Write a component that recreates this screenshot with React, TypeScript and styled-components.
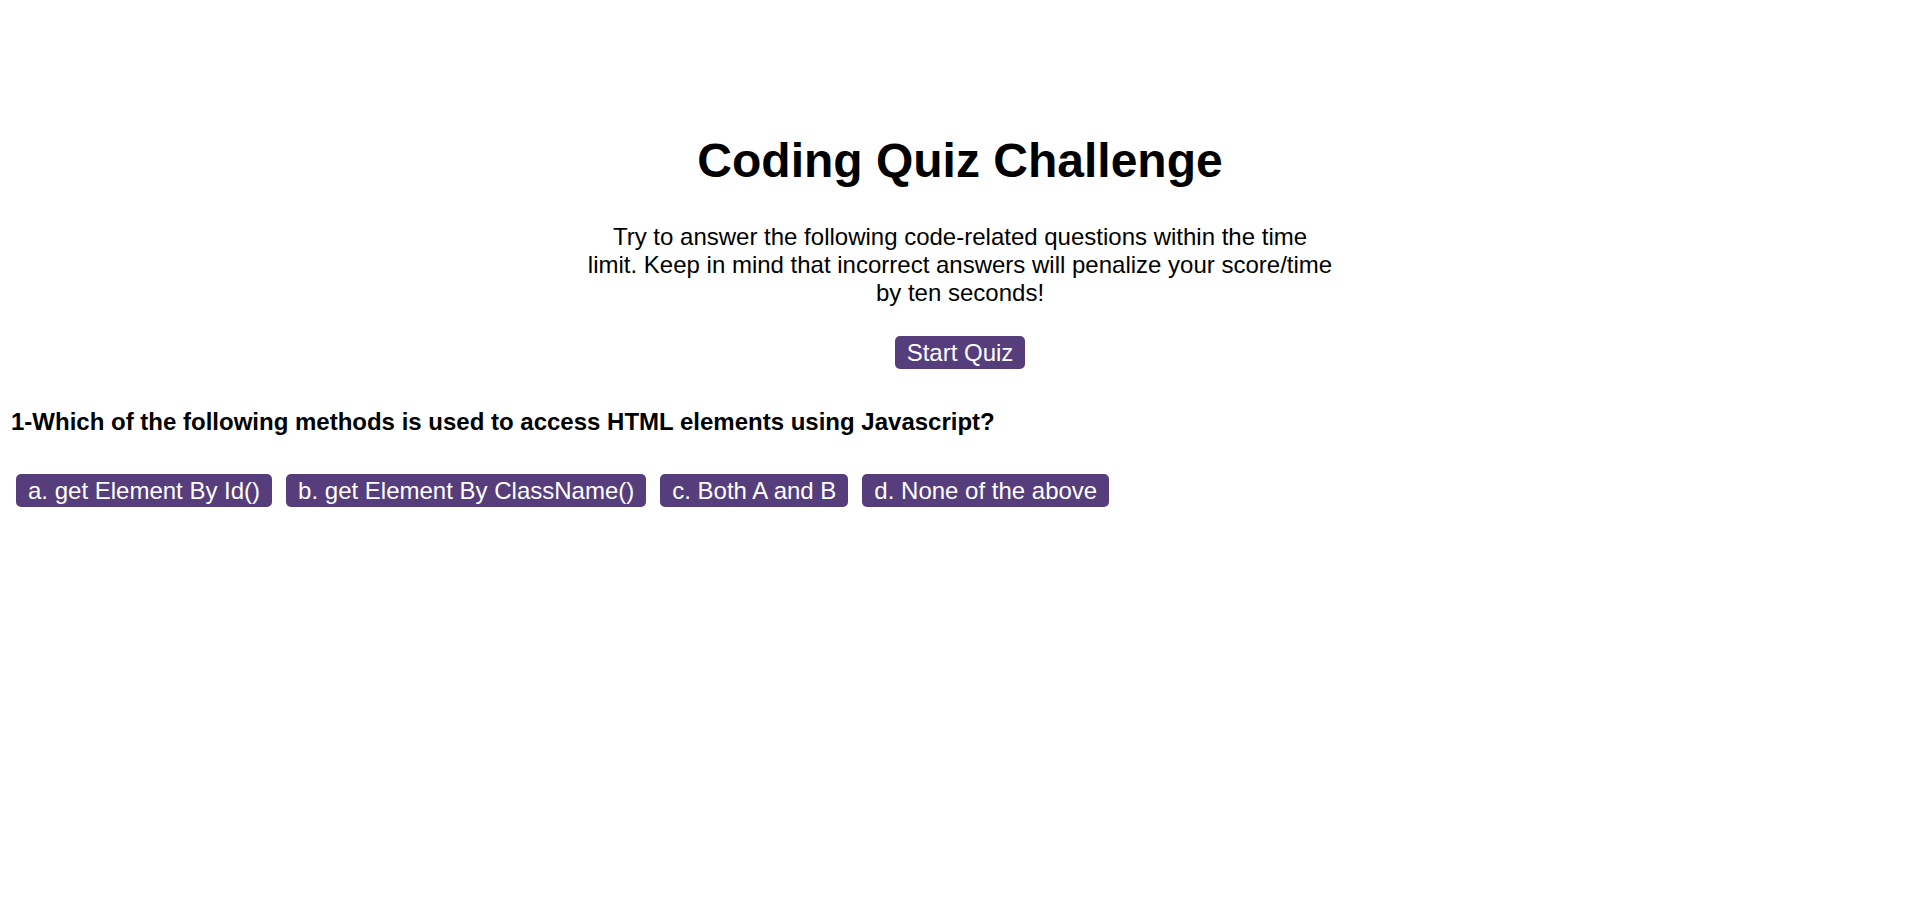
import React from "react";
import styled, { createGlobalStyle } from "styled-components";

const GlobalStyle = createGlobalStyle`
  html, body {
    margin: 0;
    padding: 0;
    background: #ffffff;
  }
  body {
    font-family: "Liberation Sans", Arial, sans-serif;
    color: #000000;
  }
`;

const Page = styled.main`
  padding: 133px 8px 0 8px;
`;

const Intro = styled.section`
  display: flex;
  flex-direction: column;
  align-items: center;
  text-align: center;
`;

const Title = styled.h1`
  margin: 0;
  font-size: 48px;
  line-height: 56px;
  font-weight: 700;
`;

const Lead = styled.p`
  margin: 34px 0 0 0;
  width: 746px;
  font-size: 24px;
  line-height: 28px;
`;

const Button = styled.button`
  font-family: "Liberation Sans", Arial, sans-serif;
  font-size: 24px;
  line-height: 29px;
  padding: 2px 12px;
  border: none;
  border-radius: 5px;
  background: #563d7c;
  color: #ffffff;
  cursor: pointer;
  white-space: nowrap;
`;

const StartButton = styled(Button)`
  margin-top: 29px;
`;

const Question = styled.h2`
  margin: 39px 0 0 3px;
  font-size: 24px;
  line-height: 28px;
  font-weight: 700;
`;

const Answers = styled.div`
  display: flex;
  gap: 14px;
  margin-top: 38px;
  padding-left: 8px;
`;

const answers = [
  "a. get Element By Id()",
  "b. get Element By ClassName()",
  "c. Both A and B",
  "d. None of the above",
];

export default function App() {
  return (
    <>
      <GlobalStyle />
      <Page>
        <Intro>
          <Title>Coding Quiz Challenge</Title>
          <Lead>
            Try to answer the following code-related questions within the time
            limit. Keep in mind that incorrect answers will penalize your
            score/time by ten seconds!
          </Lead>
          <StartButton>Start Quiz</StartButton>
        </Intro>
        <Question>
          1-Which of the following methods is used to access HTML elements using
          Javascript?
        </Question>
        <Answers>
          {answers.map((a) => (
            <Button key={a}>{a}</Button>
          ))}
        </Answers>
      </Page>
    </>
  );
}
